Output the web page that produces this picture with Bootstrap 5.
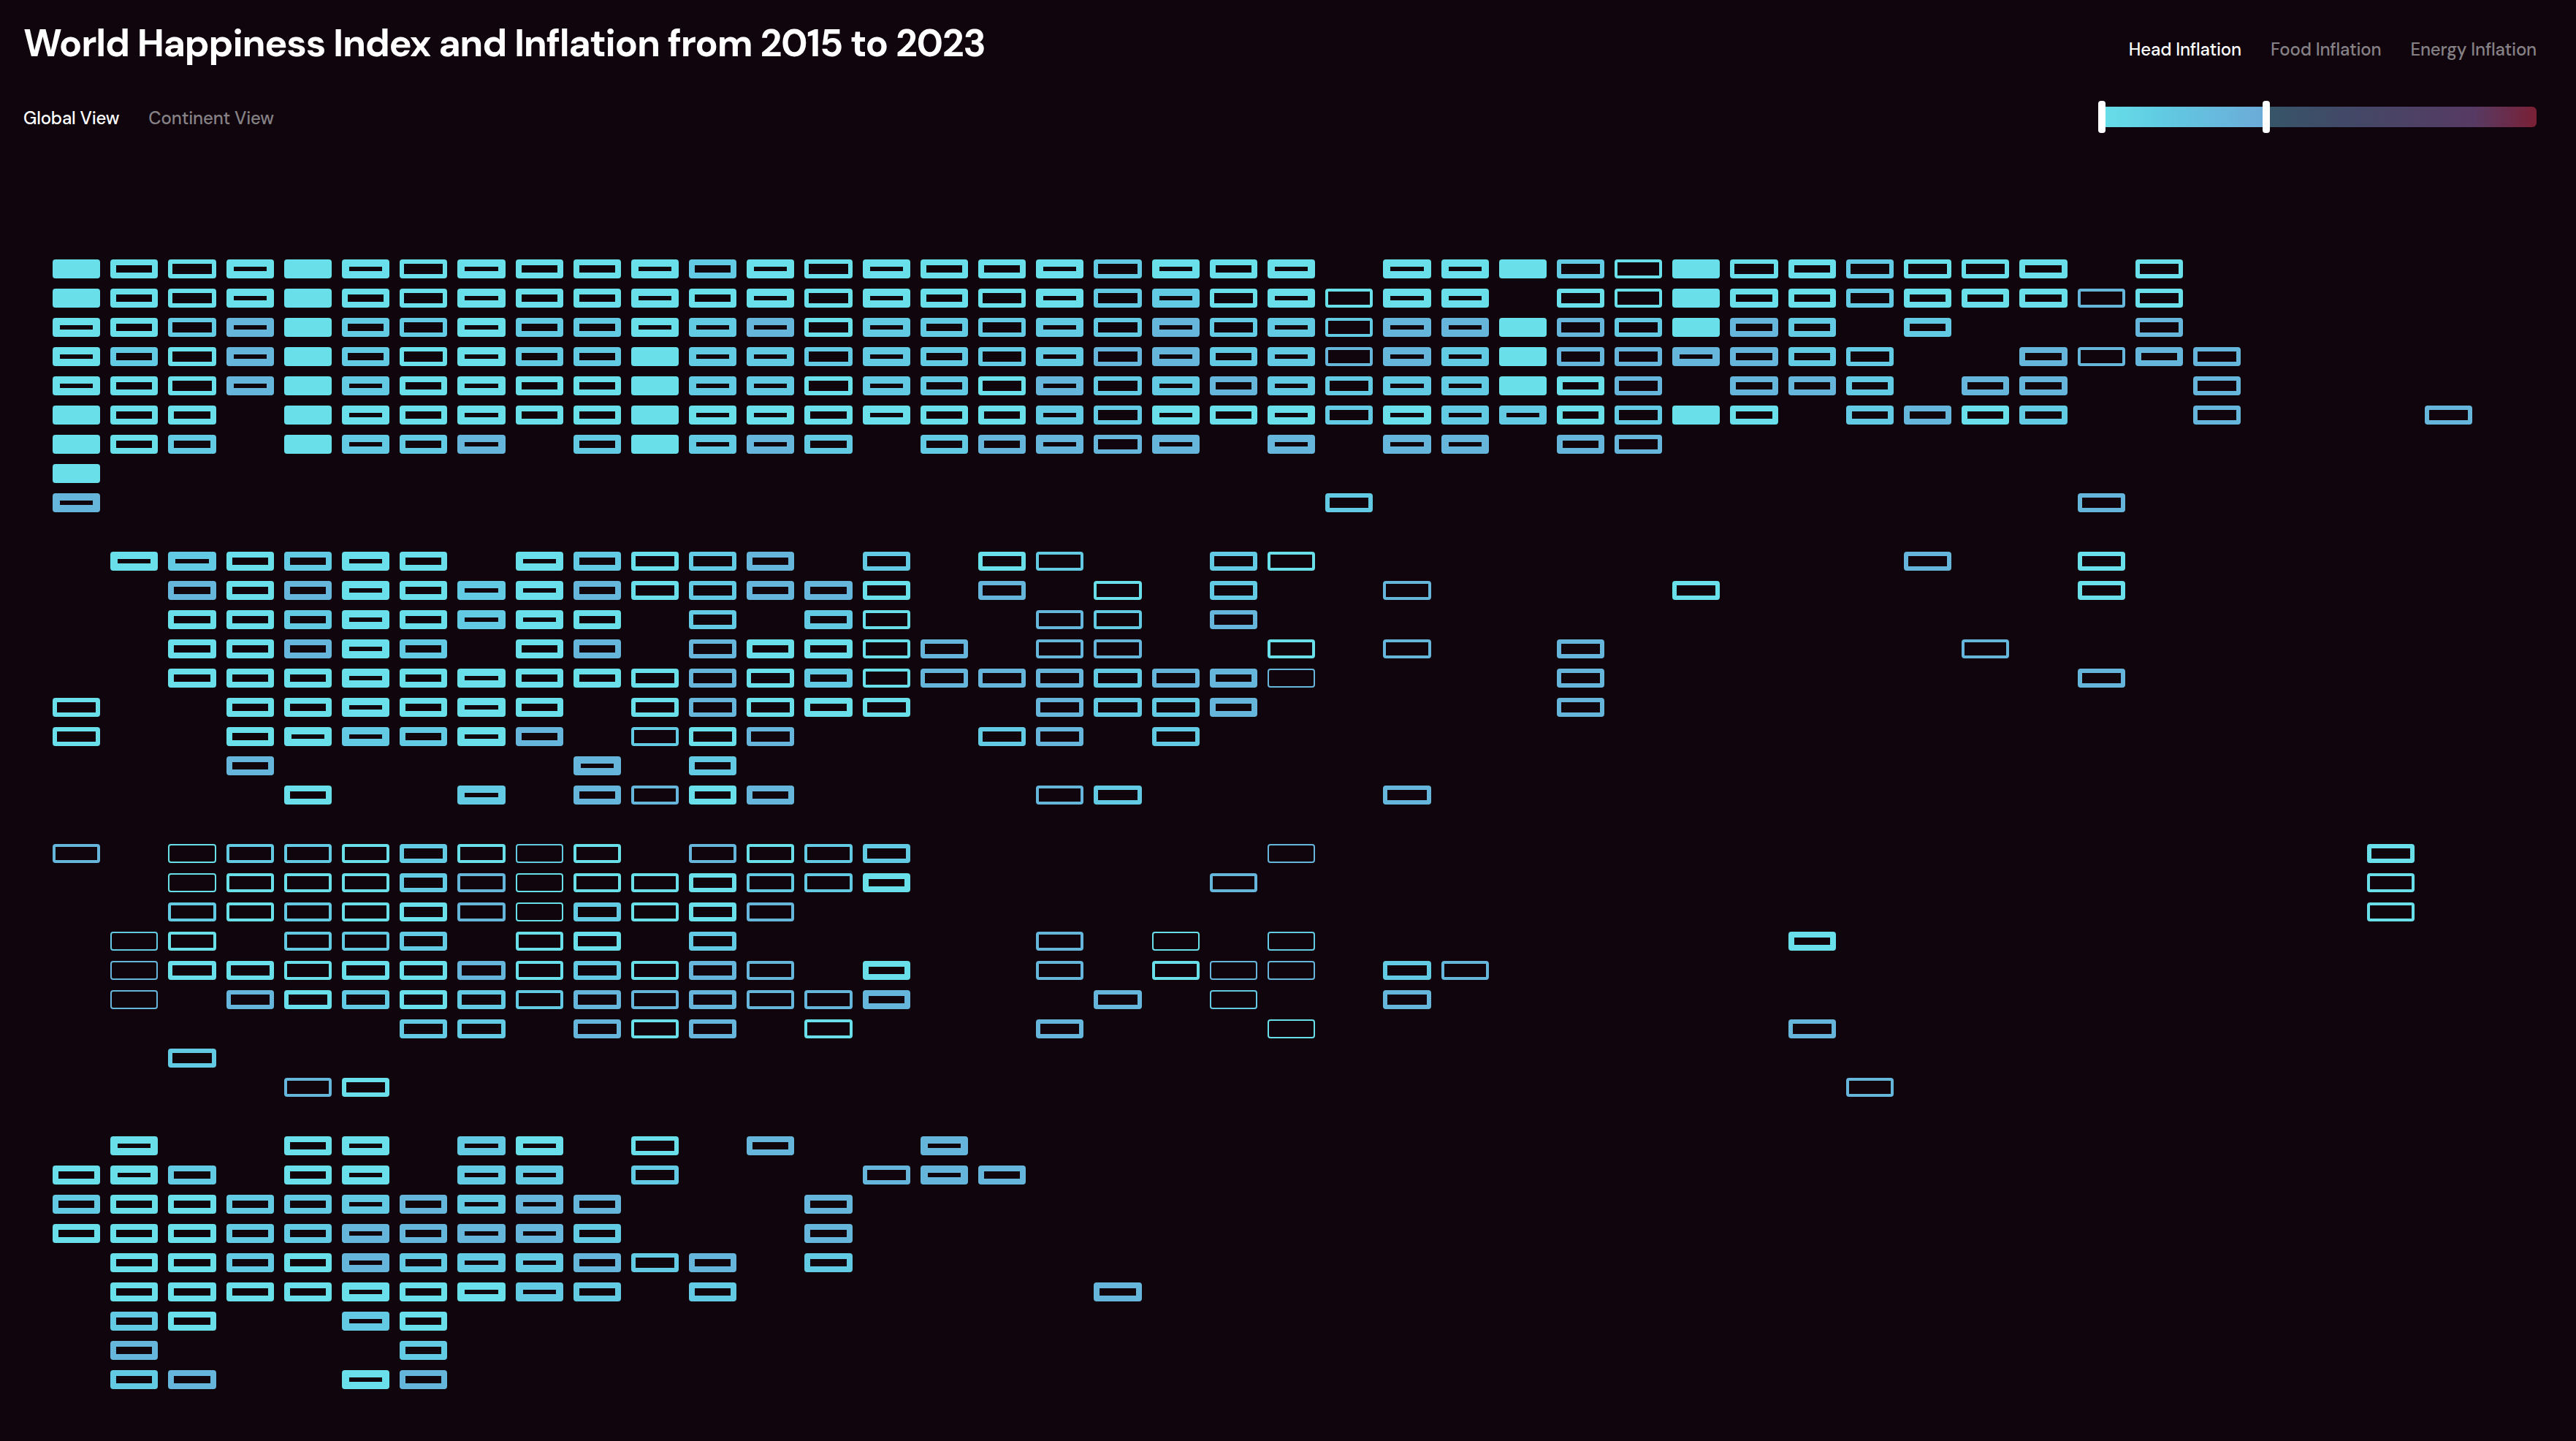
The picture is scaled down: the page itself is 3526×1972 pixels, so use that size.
<!DOCTYPE html>
<html lang="en">
<head>
  <meta charset="UTF-8">
  <meta name="viewport" content="width=device-width, initial-scale=1.0">
  <title>World Happiness Index and Inflation from 2015 to 2023</title>
  <link href="https://cdn.jsdelivr.net/npm/bootstrap@5.3.3/dist/css/bootstrap.min.css" rel="stylesheet">
  <style>
    body { background-color: #10050d; color: #fff; font-family: "DM Sans", Inter, "Liberation Sans", sans-serif; overflow: hidden; height: 1972px; }
    .page-head { height: 355px; padding: 27px 54px 0 32px; }
    .page-title { font-size: 52px; font-weight: 700; line-height: 64px; letter-spacing: -1.26px; }
    .tabs { gap: 40px; }
    .tabs a { color: #868185; font-size: 24px; font-weight: 500; line-height: 32px; text-decoration: none; letter-spacing: -.18px; }
    .tabs a.active { color: #fff; }
    .view-tabs { margin-top: 55px; }
    .kind-tabs { margin-top: 25px; }

    /* inflation range slider */
    .range { width: 595px; height: 28px; margin-top: 62px; }
    .range-on { width: 225px; background: linear-gradient(90deg, #68dfe9, #60cbe2 36%, #6caad8); }
    .range-off { border-radius: 0 6px 6px 0; background: linear-gradient(90deg, #365669, #414967 28%, #573a63 77%, #7a2035); }
    .handle { top: -8px; width: 10px; height: 44px; border-radius: 4px; background: #fff; }
    .handle-min { left: -5px; }
    .handle-max { left: 220px; }

    .bands { gap: 54px; padding-left: 72px; }
    .band { display: grid; grid-template-columns: repeat(43, 65.2px); grid-template-rows: repeat(9, 26px); gap: 14px; }
    .tile { border: 0 solid; border-radius: 4px; }
    .hue-a { border-color: #68dfe9; }
    .hue-b { border-color: #62cae2; }
    .hue-c { border-color: #66b5db; }
    .w-1x { border-width: 2px; }
    .w-2x { border-width: 4px; }
    .w-3x { border-width: 6px; }
    .w-4x { border-width: 8px; }
    .w-5x { border-width: 10px; }
    .w-6x { border-width: 13px; background-color: #68dfe9; }
  </style>
</head>
<body>
<header class="page-head d-flex justify-content-between">
  <div>
    <h1 class="page-title text-nowrap m-0">World Happiness Index and Inflation from 2015 to 2023</h1>
    <nav class="tabs view-tabs d-flex">
      <a class="active" href="#">Global View</a>
      <a href="#">Continent View</a>
    </nav>
  </div>
  <div class="d-flex flex-column align-items-end">
    <nav class="tabs kind-tabs d-flex">
      <a class="active" href="#">Head Inflation</a>
      <a href="#">Food Inflation</a>
      <a href="#">Energy Inflation</a>
    </nav>
    <div class="range d-flex position-relative">
      <div class="range-on"></div>
      <div class="range-off flex-grow-1"></div>
      <span class="handle handle-min position-absolute"></span>
      <span class="handle handle-max position-absolute"></span>
    </div>
  </div>
</header>

<main class="bands d-flex flex-column" id="bands"></main>

<script>
// One string per band, one line per row.
// A letter is the inflation colour, the digit the happiness weight; .N skips N columns.
const BANDS = [
`a6 a4 a3 a5 a6 a5 a3 a5 a4 a4 a5 b4 a5 a3 a5 a4 a4 a5 b3 a5 a4 a5 .1 a5 a5 a6 b3 a2 a6 a3 a4 b3 a3 a3 a4 .1 a3
a6 a4 a3 a5 a6 a4 a3 a5 a4 a4 a5 a4 a5 a3 a5 a4 a3 a5 b3 b5 a3 a5 a2 a5 a5 .1 a3 a2 a6 a4 a4 b3 a4 a4 a4 c2 a3
a5 a4 b3 c5 a6 b4 b3 a5 b4 b4 a5 b5 c5 a3 b5 b4 b3 b5 b3 c5 b3 b5 b2 c5 c5 a6 c3 b3 a6 c4 b4 .1 b4 .3 c3
a5 b4 a3 c5 a6 b4 a3 a5 b4 b4 a6 b5 b5 b3 b5 b4 b3 b5 c3 c5 b4 b5 c2 c5 b5 a6 c3 c3 c5 c4 b4 b3 .2 c4 c2 c4 c3
a5 a4 a3 c5 a6 b5 a4 a5 a4 a4 a6 b5 b5 a3 b5 b4 a3 c5 b3 b5 c4 b5 b3 b5 b5 a6 a4 c3 .1 c4 c4 b4 .1 c4 c4 .2 c3
a6 a4 a4 .1 a6 a5 a4 a5 a4 a4 a6 a5 a5 a4 a5 a4 a4 b5 b3 a5 a4 a5 b3 a5 b5 b5 a4 b3 a6 a4 .1 b4 c4 a4 b4 .2 c3 .3 c3
a6 a4 b4 .1 a6 b5 b4 c5 .1 b4 a6 b5 c5 b4 .1 b4 c4 c5 c3 c5 .1 c5 .1 c5 c5 .1 c4 c3
a6
c5 .21 b3 .12 c3`,
`.1 a5 b5 a4 b4 a5 a4 .1 a5 b4 a3 b3 c4 .1 b3 .1 a3 b2 .2 b3 a2 .10 c3 .2 a3
.2 c4 a4 c4 a5 a4 b5 a5 c4 a3 b3 c4 c4 a3 .1 c3 .1 a2 .1 b3 .2 c2 .4 a3 .6 a3
.2 a4 a4 b4 a5 a4 b5 a5 a4 .1 b3 .1 b4 a2 .2 c2 b2 .1 c3
.2 a4 a4 c4 a5 b4 .1 a4 c4 .1 c3 a4 a4 a2 c3 .1 c2 c2 .2 a2 .1 c2 .2 c3 .6 c2
.2 a4 a4 a4 a5 a4 a5 a4 a4 a3 c3 a3 b4 a2 c3 c3 c3 b3 c3 c4 c1 .4 c3 .8 c3
a3 .2 a4 a4 a5 a4 a5 a4 .1 a3 c3 a3 a4 a3 .2 c3 b3 b3 c4 .5 c3
a3 .2 a4 a5 b5 b4 a5 c4 .1 b2 a3 c3 .3 b3 c3 .1 b3
.3 c4 .5 c5 .1 b4
.4 a4 .2 b5 .1 c4 c2 a4 c4 .4 c2 b3 .4 c3`,
`c2 .1 a1 b2 b2 a2 b3 a2 b1 a2 .1 c2 a2 b2 b3 .6 c1 .18 a3
.2 a1 a2 a2 a2 b3 c2 a1 a2 a2 a3 b2 b2 a4 .5 c2 .19 a2
.2 b2 a2 b2 a2 a3 c2 a1 b3 a2 a3 c2 .27 a2
.1 b1 a2 .1 b2 b2 b3 .1 a2 a3 .1 b3 .5 c2 .1 a1 .1 b1 .8 a4
.1 c1 a3 a3 a2 a3 a3 c3 a2 b3 a2 c3 c2 .1 a4 .2 c2 .1 a2 c1 c1 .1 b3 c2
.1 c1 .1 c3 a3 b3 a3 b3 b2 c3 c2 c3 c2 c2 c4 .3 c3 .1 b1 .2 c3
.6 b3 b3 .1 c3 a2 c3 .1 a2 .3 c3 .3 a1 .8 c3
.2 b3
.4 c2 a3 .25 c2`,
`.1 a5 .2 a4 a5 .1 b5 a5 .1 a3 .1 c4 .2 c5
a4 a5 b4 .1 a4 a5 .1 b5 b5 .1 b3 .3 c3 c5 c4
b4 a4 a4 b4 b4 b5 c4 b5 c5 c4 .3 c4
a4 a4 a4 b4 b4 c5 c4 c5 c5 b4 .3 c4
.1 a4 a4 b4 a4 c5 b4 b5 b5 c4 b3 c4 .1 b4
.1 a4 a4 a4 a4 a5 a4 a5 b5 b4 .1 b4 .6 c4
.1 b4 a4 .2 b5 a4
.1 c4 .4 b4
.1 b4 c4 .2 a5 c4`
];

function drawBand(text) {
  let html = '';
  text.split('\n').forEach((line, row) => {
    let col = 1;
    line.split(' ').forEach(cell => {
      if (cell[0] === '.') {
        col += Number(cell.slice(1));
        return;
      }
      html += `<div class="tile hue-${cell[0]} w-${cell[1]}x" style="grid-area: ${row + 1} / ${col}"></div>`;
      col++;
    });
  });
  return `<section class="band">${html}</section>`;
}

document.getElementById('bands').innerHTML = BANDS.map(drawBand).join('');
</script>
<script src="https://cdn.jsdelivr.net/npm/bootstrap@5.3.3/dist/js/bootstrap.bundle.min.js"></script>
</body>
</html>
